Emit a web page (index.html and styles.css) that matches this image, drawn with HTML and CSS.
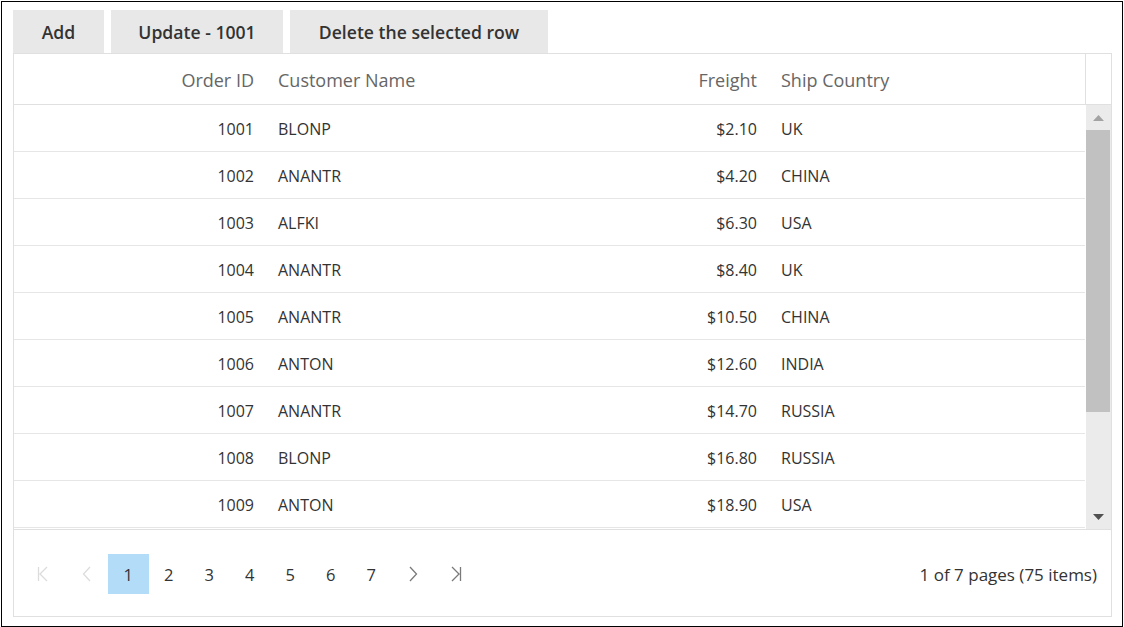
FILE: index.html
```html
<!DOCTYPE html>
<html>
<head>
<meta charset="utf-8">
<link rel="stylesheet" href="styles.css">
</head>
<body>
<div class="frame">
  <div class="toolbar">
    <button class="btn btn-add">Add</button>
    <button class="btn btn-update">Update - 1001</button>
    <button class="btn btn-delete">Delete the selected row</button>
  </div>
  <div class="grid">
    <div class="grid-header">
      <div class="hrow">
        <div class="cell c1 right">Order ID</div>
        <div class="cell c2">Customer Name</div>
        <div class="cell c3 right">Freight</div>
        <div class="cell c4">Ship Country</div>
      </div>
      <div class="hspacer"></div>
    </div>
    <div class="grid-body">
      <div class="rows">
        <div class="row"><div class="cell c1 right">1001</div><div class="cell c2">BLONP</div><div class="cell c3 right">$2.10</div><div class="cell c4">UK</div></div>
        <div class="row"><div class="cell c1 right">1002</div><div class="cell c2">ANANTR</div><div class="cell c3 right">$4.20</div><div class="cell c4">CHINA</div></div>
        <div class="row"><div class="cell c1 right">1003</div><div class="cell c2">ALFKI</div><div class="cell c3 right">$6.30</div><div class="cell c4">USA</div></div>
        <div class="row"><div class="cell c1 right">1004</div><div class="cell c2">ANANTR</div><div class="cell c3 right">$8.40</div><div class="cell c4">UK</div></div>
        <div class="row"><div class="cell c1 right">1005</div><div class="cell c2">ANANTR</div><div class="cell c3 right">$10.50</div><div class="cell c4">CHINA</div></div>
        <div class="row"><div class="cell c1 right">1006</div><div class="cell c2">ANTON</div><div class="cell c3 right">$12.60</div><div class="cell c4">INDIA</div></div>
        <div class="row"><div class="cell c1 right">1007</div><div class="cell c2">ANANTR</div><div class="cell c3 right">$14.70</div><div class="cell c4">RUSSIA</div></div>
        <div class="row"><div class="cell c1 right">1008</div><div class="cell c2">BLONP</div><div class="cell c3 right">$16.80</div><div class="cell c4">RUSSIA</div></div>
        <div class="row"><div class="cell c1 right">1009</div><div class="cell c2">ANTON</div><div class="cell c3 right">$18.90</div><div class="cell c4">USA</div></div>
      </div>
      <div class="scrollbar">
        <div class="sb-btn"><svg width="11" height="6" viewBox="0 0 11 6"><polygon points="5.5,0 11,6 0,6" fill="#a3a3a3"/></svg></div>
        <div class="sb-track"><div class="sb-thumb"></div></div>
        <div class="sb-btn"><svg width="11" height="6" viewBox="0 0 11 6"><polygon points="0,0 11,0 5.5,6" fill="#505050"/></svg></div>
      </div>
    </div>
    <div class="pager">
      <div class="pager-nav">
        <span class="pg-icon pg-first"><svg width="12" height="16" viewBox="0 0 12 16"><path d="M1.5 1 V15 M10 1 L3 8 L10 15" fill="none" stroke="#dcdcdc" stroke-width="1.3"/></svg></span>
        <span class="pg-icon pg-prev"><svg width="10" height="16" viewBox="0 0 10 16"><path d="M8 1 L1.5 8 L8 15" fill="none" stroke="#dcdcdc" stroke-width="1.3"/></svg></span>
        <span class="pg-num active">1</span>
        <span class="pg-num">2</span>
        <span class="pg-num">3</span>
        <span class="pg-num">4</span>
        <span class="pg-num">5</span>
        <span class="pg-num">6</span>
        <span class="pg-num">7</span>
        <span class="pg-icon pg-next"><svg width="10" height="16" viewBox="0 0 10 16"><path d="M2 1 L8.5 8 L2 15" fill="none" stroke="#7a7a7a" stroke-width="1.3"/></svg></span>
        <span class="pg-icon pg-last"><svg width="12" height="16" viewBox="0 0 12 16"><path d="M2 1 L9 8 L2 15 M10.5 1 V15" fill="none" stroke="#7a7a7a" stroke-width="1.3"/></svg></span>
      </div>
      <div class="pager-info">1 of 7 pages (75 items)</div>
    </div>
  </div>
</div>
</body>
</html>
```

FILE: styles.css
```css
* { box-sizing: border-box; }
html, body { margin: 0; padding: 0; background: #fff; }
body {
  font-family: "Open Sans", "Noto Sans", sans-serif;
  color: #333;
}
.frame {
  margin: 1px 0 0 1px;
  width: 1122px;
  height: 626px;
  border: 1px solid #000;
  padding: 8px 0 0 11px;
}
.toolbar {
  display: flex;
  gap: 7px;
  height: 43px;
}
.btn {
  height: 43px;
  border: none;
  background: #e8e8e8;
  font-family: "Open Sans", sans-serif;
  font-weight: 600;
  font-size: 17.6px;
  color: #333;
  padding: 0;
  margin: 0;
}
.btn-add { width: 91px; }
.btn-update { width: 172px; }
.btn-delete { width: 258px; }

.grid {
  width: 1099px;
  height: 564px;
  border: 1px solid #e0e0e0;
  display: flex;
  flex-direction: column;
}
.grid-header {
  display: flex;
  height: 51px;
  border-bottom: 1px solid #e0e0e0;
  flex: none;
}
.hrow { display: flex; width: 1071px; }
.hrow .cell { color: #666; font-size: 18px; padding-top: 2px; }
.hspacer { width: 26px; border-left: 1px solid #e0e0e0; }
.cell {
  font-size: 16px;
  padding: 0 12px;
  display: flex;
  align-items: center;
  white-space: nowrap;
}
.cell.right { justify-content: flex-end; }
.c1 { width: 252px; }
.c2 { width: 253px; }
.c3 { width: 250px; }
.c4 { flex: 1; }

.grid-body {
  display: flex;
  height: 425px;
  border-bottom: 1px solid #e0e0e0;
  flex: none;
  overflow: hidden;
}
.rows { width: 1071px; overflow: hidden; }
.row {
  display: flex;
  height: 47px;
  border-bottom: 1px solid #e6e6e6;
}
.row .cell { color: #333; padding-top: 1px; }
.scrollbar {
  width: 26px;
  border-left: 1px solid #fff;
  background: #ebebeb;
  display: flex;
  flex-direction: column;
}
.sb-btn {
  height: 25px;
  display: flex;
  align-items: center;
  justify-content: center;
}
.sb-track { flex: 1; }
.sb-thumb {
  height: 282px;
  background: #c1c1c1;
  margin: 0 1px 0 0;
}

.pager {
  flex: 1;
  display: flex;
  align-items: center;
  justify-content: space-between;
  padding: 2px 14px 0 8px;
}
.pager-nav { display: flex; align-items: center; }
.pg-icon {
  width: 42px;
  height: 40px;
  display: flex;
  align-items: center;
  justify-content: center;
}
.pg-prev { margin-left: 2px; }
.pg-last { margin-left: 1px; }
.pg-num {
  width: 40.5px;
  height: 40px;
  display: flex;
  align-items: center;
  justify-content: center;
  font-size: 16.5px;
  color: #333;
}
.pg-num.active { background: #b3dcf8; }
.pager-info { font-size: 17px; color: #333; }
```
